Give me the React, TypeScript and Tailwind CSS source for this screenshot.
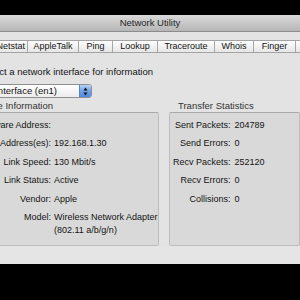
import React from "react";

const font = { fontFamily: '"Liberation Sans", Arial, sans-serif' };

function Tab({ w, label, end }: { w: number; label: string; end?: boolean }) {
  return (
    <div
      className={`flex h-full shrink-0 items-center border-r border-[#a6a6a6] ${end ? "justify-end pr-[2px]" : "justify-center"}`}
      style={{ width: w }}
    >
      <span className="whitespace-nowrap">{label}</span>
    </div>
  );
}

function Row({ label, value, lw, gap }: { label: string; value: React.ReactNode; lw: number; gap: number }) {
  return (
    <div className="flex items-start">
      <div className="flex shrink-0 justify-end whitespace-nowrap" style={{ width: lw }}>
        {label}
      </div>
      <div className="whitespace-nowrap" style={{ marginLeft: gap }}>
        {value}
      </div>
    </div>
  );
}

export default function App() {
  return (
    <div className="relative h-[300px] w-[300px] overflow-hidden bg-black text-[9px] text-[#141414]" style={font}>
      <div className="h-[15px] bg-black" />
      <div className="flex h-[249px] flex-col bg-[#e3e3e3]">
        {/* title bar */}
        <div className="flex h-[17px] shrink-0 items-center justify-center border-b border-[#8c8c8c] bg-gradient-to-b from-[#dadada] to-[#b6b6b6] text-[9.5px] text-[#262626]">
          Network Utility
        </div>
        {/* tabs */}
        <div className="mt-[8px] flex h-[13px] shrink-0 border-y border-[#a3a3a3] bg-gradient-to-b from-[#fdfdfd] to-[#e6e6e6]">
          <div className="ml-[-60px] flex h-full">
            <Tab w={40} label="Info" />
            <Tab w={48} label="Netstat" end />
            <Tab w={51} label="AppleTalk" />
            <Tab w={34} label="Ping" />
            <Tab w={45} label="Lookup" />
            <Tab w={57} label="Traceroute" />
            <Tab w={39} label="Whois" />
            <Tab w={42} label="Finger" />
            <Tab w={60} label="Port Scan" />
          </div>
        </div>
        {/* instruction */}
        <div className="mt-[12px] flex h-[13px] w-[153px] shrink-0 items-center justify-end text-[9.5px] leading-[13px]">
          <span className="whitespace-nowrap">Select a network interface for information</span>
        </div>
        {/* popup */}
        <div className="mt-[6px] ml-[-58px] flex h-[14px] w-[150px] shrink-0 overflow-hidden rounded-[3px] border border-[#8f8f8f] bg-gradient-to-b from-[#ffffff] to-[#ececec] text-[9.5px]">
          <div className="flex flex-1 items-center justify-end pr-[22px]">
            <span className="whitespace-nowrap">AirPort Interface (en1)</span>
          </div>
          <div className="flex w-[12px] flex-col items-center justify-center border-l border-[#5a83b8] bg-gradient-to-b from-[#b7d3f6] via-[#6fa3e8] to-[#4d8be0]">
            <svg width="5" height="9" viewBox="0 0 5 9">
              <path d="M2.5 0.5 L4.5 3.5 L0.5 3.5 Z" fill="#111" />
              <path d="M2.5 8.5 L4.5 5.5 L0.5 5.5 Z" fill="#111" />
            </svg>
          </div>
        </div>
        {/* group labels */}
        <div className="mt-[3px] flex h-[11px] shrink-0 items-center text-[9.5px] text-[#333]">
          <div className="flex w-[53px] justify-end">
            <span className="whitespace-nowrap">Interface Information</span>
          </div>
          <div className="ml-[125px] whitespace-nowrap">Transfer Statistics</div>
        </div>
        {/* panels */}
        <div className="ml-[-60px] flex h-[134px] shrink-0 gap-[10px]">
          <div className="flex w-[223px] flex-col gap-[5.6px] rounded-[2px] border border-[#bdbdbd] border-t-[#a9a9a9] bg-[#d9d9d9] pt-[5.5px] leading-[13px]">
            <Row lw={110} gap={3} label="Hardware Address:" value="" />
            <Row lw={110} gap={3} label="IP Address(es):" value="192.168.1.30" />
            <Row lw={110} gap={3} label="Link Speed:" value="130 Mbit/s" />
            <Row lw={110} gap={3} label="Link Status:" value="Active" />
            <Row lw={110} gap={3} label="Vendor:" value="Apple" />
            <Row
              lw={110}
              gap={3}
              label="Model:"
              value={
                <>
                  Wireless Network Adapter
                  <br />
                  (802.11 a/b/g/n)
                </>
              }
            />
          </div>
          <div className="flex w-[200px] flex-col gap-[5.6px] rounded-[2px] border border-[#bdbdbd] border-t-[#a9a9a9] bg-[#d9d9d9] pt-[5.5px] leading-[13px]">
            <Row lw={61} gap={4} label="Sent Packets:" value="204789" />
            <Row lw={61} gap={4} label="Send Errors:" value="0" />
            <Row lw={61} gap={4} label="Recv Packets:" value="252120" />
            <Row lw={61} gap={4} label="Recv Errors:" value="0" />
            <Row lw={61} gap={4} label="Collisions:" value="0" />
          </div>
        </div>
        <div className="flex-1 bg-[#e5e5e5]" />
      </div>
    </div>
  );
}
